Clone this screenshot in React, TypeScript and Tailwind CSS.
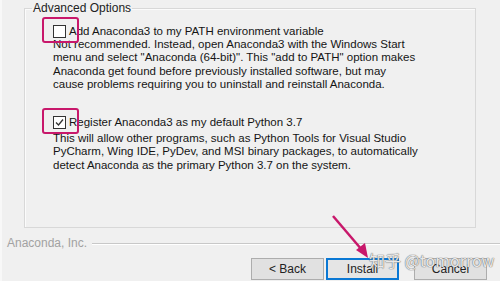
import React from 'react';

const font = { fontFamily: '"Liberation Sans", Arial, sans-serif' };

function Box({ checked }: { checked?: boolean }) {
  return (
    <span className="relative inline-flex shrink-0">
      <span className="w-[13px] h-[13px] border border-[#333] bg-white flex items-center justify-center">
        {checked && (
          <svg width="11" height="11" viewBox="0 0 11 11">
            <path d="M2 5.5 L4.5 8 L9 2.5" fill="none" stroke="#333" strokeWidth="1.3" />
          </svg>
        )}
      </span>
      {/* magenta highlight drawn over the checkbox */}
      <span className="absolute left-[-11px] top-[-8px] w-[37px] h-[26px] border-[2.5px] border-[#c8186b] rounded-[3px]" />
    </span>
  );
}

function Option({ label, lines, checked, gap }: { label: string; lines: string[]; checked?: boolean; gap: string }) {
  return (
    <div className="flex flex-col">
      <div className="flex items-center gap-[3px] h-[13px]">
        <Box checked={checked} />
        <span>{label}</span>
      </div>
      <div className={`${gap} leading-[13.3px]`}>
        {lines.map((l) => (
          <div key={l}>{l}</div>
        ))}
      </div>
    </div>
  );
}

function Btn({ children, focused }: { children: React.ReactNode; focused?: boolean }) {
  return (
    <button
      className={
        focused
          ? 'w-[73px] h-[22px] bg-[#e5e5e5] border-2 border-[#0a78d4] text-[12px] text-[#222]'
          : 'w-[73px] h-[22px] bg-[#e1e1e1] border border-[#adadad] text-[12px] text-[#222]'
      }
    >
      {children}
    </button>
  );
}

export default function App() {
  return (
    <div
      className="relative w-[500px] h-[281px] overflow-hidden bg-[#f0f0f0] text-[11.5px] leading-[13px] text-[#151515] shadow-[inset_2px_0_0_#f8f8f8]"
      style={font}
    >
      <fieldset className="ml-[24px] mt-[1px] w-[452px] h-[227px] border border-[#d8d8d8] pl-[28px] pr-2 pt-[10px] shadow-[inset_1px_1px_0_#fbfbfb]">
        <legend className="ml-[-21px] px-[1px] text-[12px] leading-[14px] text-[#222]">Advanced Options</legend>
        <div className="flex flex-col gap-[25px]">
          <Option
            gap="mt-0"
            label="Add Anaconda3 to my PATH environment variable"
            lines={[
              'Not recommended. Instead, open Anaconda3 with the Windows Start',
              'menu and select "Anaconda (64-bit)". This "add to PATH" option makes',
              'Anaconda get found before previously installed software, but may',
              'cause problems requiring you to uninstall and reinstall Anaconda.',
            ]}
          />
          <Option
            checked
            gap="mt-[3px]"
            label="Register Anaconda3 as my default Python 3.7"
            lines={[
              'This will allow other programs, such as Python Tools for Visual Studio',
              'PyCharm, Wing IDE, PyDev, and MSI binary packages, to automatically',
              'detect Anaconda as the primary Python 3.7 on the system.',
            ]}
          />
        </div>
      </fieldset>

      <div className="flex items-center gap-[5px] pl-[7px] mt-[9px]">
        <span className="text-[12px] text-[#a2a2a2]">Anaconda, Inc.</span>
        <div className="flex-1 h-[2px] border-t border-[#c8c8c8] border-b border-b-white" />
      </div>

      <div className="flex justify-end gap-[2px] pr-[13px] mt-[8px]">
        <Btn>&lt; Back</Btn>
        <Btn focused>Install</Btn>
        <div className="w-[11px]" />
        <Btn>Cancel</Btn>
      </div>

      {/* annotation arrow */}
      <svg className="absolute left-0 top-0" width="500" height="281">
        <line x1="333" y1="216" x2="362" y2="250" stroke="#c8186b" strokeWidth="2.5" />
        <polygon points="368,258 356,250 365,243" fill="#c8186b" />
      </svg>

      {/* watermark */}
      <div
        className="absolute left-[369px] top-[250px] whitespace-nowrap text-[16px] leading-[20px] text-white/85 [text-shadow:0_0_1px_#666,0_0_1px_#666]"
        style={{ fontFamily: '"Noto Sans CJK SC", "Liberation Sans", sans-serif' }}
      >
        知乎 @tomorrow
      </div>
    </div>
  );
}
